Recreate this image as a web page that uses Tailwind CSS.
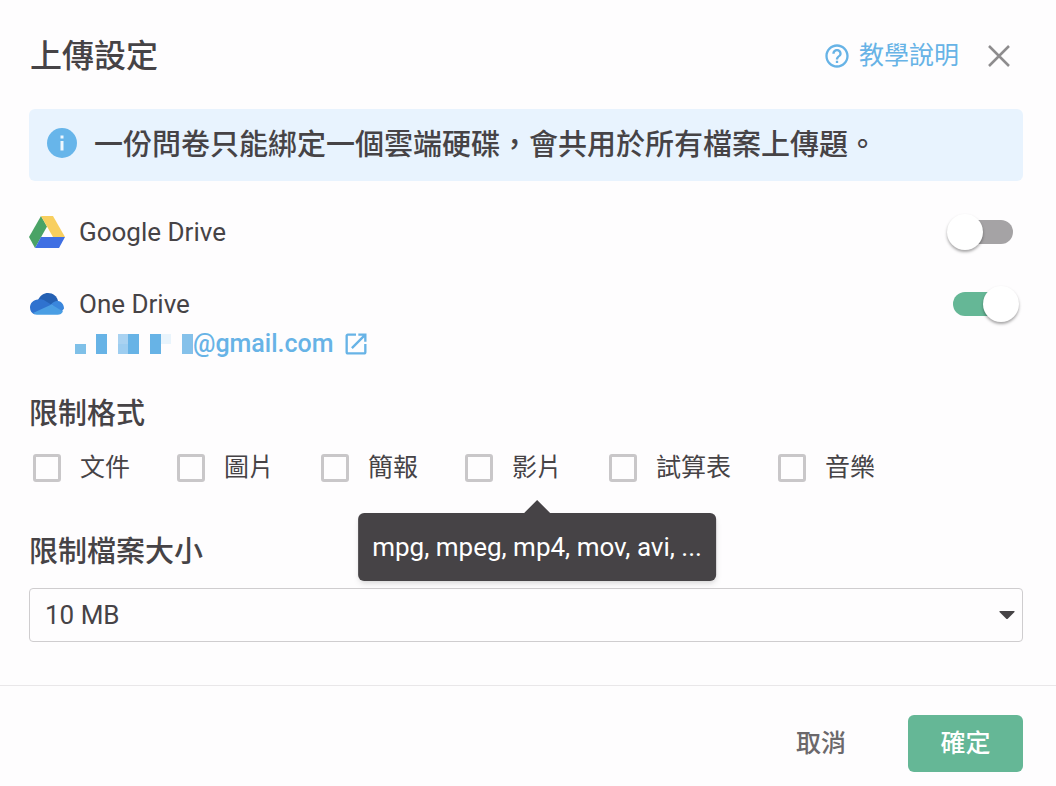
<!DOCTYPE html>
<html lang="zh-Hant">
<head>
    <meta charset="UTF-8">
    <meta name="viewport" content="width=device-width, initial-scale=1.0">
    <script src="https://cdn.jsdelivr.net/npm/@tailwindcss/browser@4"></script>
    <title>上傳設定</title>
</head>
<body class="bg-[#fefdfe] text-[#464346] text-[25px] leading-9 font-['Roboto','Noto_Sans_CJK_TC',sans-serif]">
    <div role="dialog" aria-labelledby="dialog-title" class="flex flex-col min-h-screen">
        <header class="flex items-center justify-between pt-8 pl-[30px] pr-[45px]">
            <h1 id="dialog-title" class="text-[32px] leading-12 font-medium">上傳設定</h1>
            <div class="flex items-center">
                <a href="#" class="flex items-center gap-2 text-[#67b3e6]">
                    <svg class="size-7" viewBox="0 0 24 24" fill="currentColor" aria-hidden="true">
                        <path d="M11 18h2v-2h-2v2zm1-16C6.48 2 2 6.48 2 12s4.480 10 10 10 10-4.480 10-10S17.520 2 12 2zm0 18c-4.410 0-8-3.590-8-8s3.590-8 8-8 8 3.590 8 8-3.590 8-8 8zm0-14c-2.210 0-4 1.790-4 4h2c0-1.100.9-2 2-2s2 .9 2 2c0 2-3 1.750-3 5h2c0-2.250 3-2.500 3-5 0-2.210-1.790-4-4-4z"/>
                    </svg>
                    教學說明
                </a>
                <button type="button" aria-label="關閉" class="ml-7 text-[#8e8c8e]">
                    <svg class="size-6" viewBox="0 0 24 24" fill="none" stroke="currentColor" stroke-width="2.500" aria-hidden="true">
                        <path d="M2 2l20 20M22 2L2 22"/>
                    </svg>
                </button>
            </div>
        </header>

        <main class="pl-[29px] pr-[33px] pt-[29px] pb-[43px]">
            <div class="flex items-center gap-[15px] h-[72px] px-4 rounded-md bg-[#e8f3fe]">
                <svg class="size-[34px] -mt-1" viewBox="0 0 34 34" aria-hidden="true">
                    <circle cx="17" cy="17" r="15" fill="#67b5ea"/>
                    <path d="M15.500 9.500h3v3h-3zM15.500 15h3v9.500h-3z" fill="#eef7fe"/>
                </svg>
                <p class="text-[29px] font-medium">一份問卷只能綁定一個雲端硬碟，會共用於所有檔案上傳題。</p>
            </div>

            <!-- cloud drives -->
            <label class="flex items-center mt-[33px] pr-1 text-[26px]">
                <svg class="w-9 h-8" viewBox="0 0 36 32" aria-hidden="true">
                    <path d="M12 0L0 21l6 11 12-21.500z" fill="#4aa366"/>
                    <path d="M12 0h12l12 21H24z" fill="#f8cf5f"/>
                    <path d="M12 21h24l-6 11H6z" fill="#3f6fe3"/>
                </svg>
                <span class="ml-3.5 flex-1">Google Drive</span>
                <span class="relative flex items-center w-[72px] h-9">
                    <input type="checkbox" role="switch" class="peer sr-only">
                    <span class="mx-auto w-[60px] h-6 rounded-full bg-[#a5a3a5] peer-checked:bg-[#65b796]"></span>
                    <span class="absolute left-0 size-9 rounded-full bg-white shadow-[0_2px_3px_rgb(0_0_0/0.35)] peer-checked:left-auto peer-checked:right-0"></span>
                </span>
            </label>
            <label class="flex items-center mt-9 pr-1 text-[26px]">
                <svg class="w-9 h-6" viewBox="0 0 36 24" aria-hidden="true">
                    <path d="M9 8C11 3.500 15 1 19 1c5 0 9 3 10 8l-7 4z" fill="#2460b3"/>
                    <path d="M9 7.500c3-.5 5 0 7 1.300L23 13 6 22.500C3 21.500 1 19 1 15.500 1 11 4.500 7.800 9 7.500z" fill="#2f72cf"/>
                    <path d="M22 12.500c2-2.500 4.500-4 7-3.500 3.500.5 6 3.500 6 7.500l-3 4z" fill="#3a86dc"/>
                    <path d="M4 21l18.500-8.500L34 19.500c-1 2-3 3.300-5.500 3.300H9c-2 0-3.500-.6-5-1.800z" fill="#4a9ee4"/>
                </svg>
                <span class="ml-3.5 flex-1">One Drive</span>
                <span class="relative flex items-center w-[72px] h-9">
                    <input type="checkbox" role="switch" class="peer sr-only" checked>
                    <span class="mx-auto w-[60px] h-6 rounded-full bg-[#a5a3a5] peer-checked:bg-[#65b796]"></span>
                    <span class="absolute left-0 size-9 rounded-full bg-white shadow-[0_2px_3px_rgb(0_0_0/0.35)] peer-checked:left-auto peer-checked:right-0"></span>
                </span>
            </label>
            <a href="#" class="flex items-center w-fit mt-1 ml-[46px] font-medium text-[#67b3e6]">
                <!-- masked account name -->
                <svg class="w-[118px] h-5" viewBox="0 0 118 20" fill="#67b3e6" shape-rendering="crispEdges" aria-hidden="true">
                    <rect y="10" width="11" height="10" fill="#7fc0e8"/>
                    <rect x="21" width="11" height="20"/>
                    <rect x="43" width="10" height="10" fill="#a9d2f1"/>
                    <rect x="43" y="10" width="10" height="10" fill="#9dcdf0"/>
                    <rect x="53" width="11" height="20"/>
                    <rect x="75" width="11" height="20"/>
                    <rect x="86" width="10" height="10" fill="#e9f4fc"/>
                    <rect x="107" width="11" height="20" fill="#85c1ea"/>
                </svg>
                <span>@gmail.com</span>
                <svg class="ml-2 size-7" viewBox="0 0 24 24" fill="currentColor" aria-hidden="true">
                    <path d="M19 19H5V5h7V3H5c-1.110 0-2 .9-2 2v14c0 1.100.89 2 2 2h14c1.100 0 2-.9 2-2v-7h-2v7zM14 3v2h3.590l-9.830 9.830 1.410 1.410L19 6.410V10h2V3h-7z"/>
                </svg>
            </a>

            <!-- allowed formats -->
            <fieldset class="mt-8">
                <legend class="text-[29px] leading-10 font-medium">限制格式</legend>
                <div class="flex flex-wrap gap-x-[47px] mt-4 pl-1">
                    <label class="flex items-center gap-[19px]">
                        <input type="checkbox" class="appearance-none size-7 rounded-[3px] border-3 border-[#c9c7c9] checked:bg-[#65b796]">
                        文件
                    </label>
                    <label class="flex items-center gap-[19px]">
                        <input type="checkbox" class="appearance-none size-7 rounded-[3px] border-3 border-[#c9c7c9] checked:bg-[#65b796]">
                        圖片
                    </label>
                    <label class="flex items-center gap-[19px]">
                        <input type="checkbox" class="appearance-none size-7 rounded-[3px] border-3 border-[#c9c7c9] checked:bg-[#65b796]">
                        簡報
                    </label>
                    <label class="flex items-center gap-[19px]">
                        <input type="checkbox" class="appearance-none size-7 rounded-[3px] border-3 border-[#c9c7c9] checked:bg-[#65b796]" aria-describedby="video-tip">
                        <span class="relative">
                            影片
                            <span id="video-tip" role="tooltip" class="absolute z-10 top-full left-1/2 -translate-x-1/2 mt-[27px] px-3.5 py-4 rounded-md bg-[#464346] text-[26px] text-white whitespace-nowrap shadow-md">
                                <svg class="absolute left-1/2 bottom-full -translate-x-1/2 w-[26px] h-[13px]" viewBox="0 0 26 13" fill="#464346" aria-hidden="true"><path d="M0 13L13 0l13 13z"/></svg>
                                mpg, mpeg, mp4, mov, avi, ...
                            </span>
                        </span>
                    </label>
                    <label class="flex items-center gap-[19px]">
                        <input type="checkbox" class="appearance-none size-7 rounded-[3px] border-3 border-[#c9c7c9] checked:bg-[#65b796]">
                        試算表
                    </label>
                    <label class="flex items-center gap-[19px]">
                        <input type="checkbox" class="appearance-none size-7 rounded-[3px] border-3 border-[#c9c7c9] checked:bg-[#65b796]">
                        音樂
                    </label>
                </div>
            </fieldset>

            <label for="max-size" class="block mt-[46px] text-[29px] leading-10 font-medium">限制檔案大小</label>
            <div class="relative mt-4">
                <select id="max-size" class="appearance-none block w-full h-[54px] px-[15px] rounded-sm border border-[#cfcdcf] text-[26px]">
                    <option>10 MB</option>
                </select>
                <svg class="absolute right-2 top-1/2 -translate-y-1/2 w-4 h-2 pointer-events-none" viewBox="0 0 16 8" fill="#464346" aria-hidden="true"><path d="M1 0h14q1 0 .5 1L9 7.500q-1 1-2 0L.5 1Q0 0 1 0z"/></svg>
            </div>
        </main>

        <footer class="flex justify-end gap-[30px] pl-[29px] pr-[33px] pt-[29px] pb-3.5 border-t border-[#e9e7e9]">
            <button type="button" class="px-8 h-[57px] font-medium text-[#6b686b]">取消</button>
            <button type="submit" class="min-w-[115px] px-8 h-[57px] rounded-md bg-[#65b796] font-medium text-white">確定</button>
        </footer>
    </div>
</body>
</html>
